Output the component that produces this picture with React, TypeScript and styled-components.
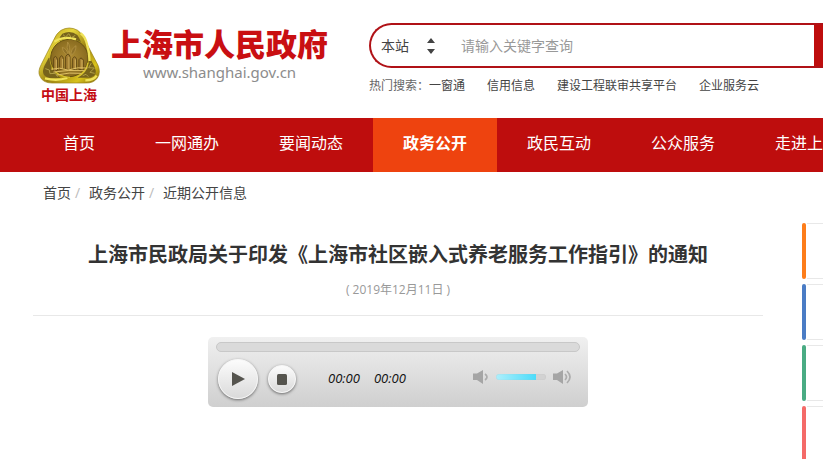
import React, { useState } from "react";
import styled, { createGlobalStyle, css } from "styled-components";

const cjk = `"Open Sans", "Noto Sans CJK SC", sans-serif`;

const GlobalStyle = createGlobalStyle`
  *, *::before, *::after { box-sizing: border-box; }
  body {
    margin: 0;
    background: #fff;
    color: #444;
    font-family: ${cjk};
    font-size: 14px;
    overflow-x: hidden;
  }
  button, input, select { font: inherit; color: inherit; }
  a { color: inherit; text-decoration: none; }
`;

const Header = styled.header`
  display: flex;
  align-items: flex-start;
  height: 118px;
  padding-left: 36px;
`;

const Brand = styled.a`
  display: flex;
  flex: 0 0 333px;
  gap: 9px;
  padding-top: 26px;
`;

const EmblemBlock = styled.span`
  display: flex;
  flex-direction: column;
  align-items: center;
  width: 66px;
`;

const EmblemCaption = styled.span`
  color: #c40d14;
  font-size: 14px;
  font-weight: 700;
  line-height: 18px;
`;

const BrandText = styled.span`
  display: flex;
  flex-direction: column;
  align-items: center;
`;

const BrandName = styled.strong`
  color: #c90f12;
  font-family: "Noto Sans CJK SC", sans-serif;
  font-size: 31px;
  font-weight: 900;
  line-height: 34px;
  white-space: nowrap;
`;

const BrandUrl = styled.span`
  color: #8c8c8c;
  font-family: "Noto Sans", sans-serif;
  font-size: 15px;
  line-height: 24px;
`;

const SearchArea = styled.div`
  flex: 1;
  min-width: 0;
  padding-top: 23px;
`;

const SearchForm = styled.form`
  display: flex;
  height: 45px;
  border: 2px solid #b01116;
  border-right: 0;
  border-radius: 23px 0 0 23px;
  overflow: hidden;
`;

const ScopeField = styled.label`
  display: flex;
  align-items: center;
  flex: 0 0 70px;
  padding-left: 10px;
`;

const ScopeSelect = styled.select`
  width: 45px;
  padding: 0;
  border: 0;
  background: transparent;
  appearance: none;
  outline: 0;
`;

const SearchInput = styled.input`
  flex: 1;
  min-width: 0;
  padding: 0 20px;
  border: 0;
  outline: 0;
  background: transparent;
  &::placeholder { color: #999; opacity: 1; }
`;

const SearchButton = styled.button`
  flex: 0 0 9px;
  padding: 0;
  border: 0;
  background: #be0d0d;
`;

const HotSearch = styled.div`
  display: flex;
  gap: 22px;
  padding-top: 8px;
  font-size: 12px;
  line-height: 20px;
  white-space: nowrap;
`;

const HotLabel = styled.span`
  margin-right: -22px;
  color: #666;
`;

const Nav = styled.nav`
  display: flex;
  height: 54px;
  padding-left: 33px;
  background: #be0d0d;
  overflow: hidden;
`;

const NavLink = styled.a<{ $active?: boolean }>`
  flex: none;
  padding: 0 30px;
  color: #fff;
  font-size: 16px;
  line-height: 50px;
  white-space: nowrap;
  ${(p) => p.$active && css`
    background: #ee430f;
    font-weight: 700;
  `}
`;

const Breadcrumb = styled.nav`
  display: flex;
  padding: 10px 0 0 43px;
  line-height: 22px;
`;

const Crumb = styled.a`
  &:not(:last-child)::after {
    content: "/";
    display: inline-block;
    width: 18px;
    padding-left: 4px;
    color: #bbb;
  }
`;

const Main = styled.main`
  display: flex;
  gap: 39px;
  padding: 19px 0 0 33px;
  overflow: hidden;
`;

const Article = styled.article`
  flex: 1;
  min-width: 0;
  text-align: center;
`;

const Heading = styled.header`
  padding: 17px 0 15px;
  border-bottom: 1px solid #e8e8e8;
`;

const Title = styled.h1`
  margin: 0;
  color: #333;
  font-size: 20px;
  font-weight: 700;
  line-height: 30px;
`;

const PublishDate = styled.time`
  display: block;
  padding-top: 10px;
  color: #999;
  font-size: 12px;
  line-height: 20px;
`;

const Player = styled.section`
  display: flex;
  flex-direction: column;
  width: 380px;
  height: 70px;
  margin: 21px auto 0;
  padding: 5px 8px 0;
  border-radius: 5px;
  background: linear-gradient(#f0f0f0, #cfcfcf);
`;

const Range = styled.input`
  display: block;
  margin: 0;
  appearance: none;
  outline: 0;
  &::-webkit-slider-thumb { appearance: none; width: 0; height: 0; }
`;

const SeekBar = styled(Range)`
  width: 100%;
  height: 10px;
  border: 1px solid #c8c8c8;
  border-radius: 5px;
  background: #dadada;
`;

const VolumeBar = styled(Range)`
  width: 50px;
  height: 6px;
  border-radius: 3px;
  background: linear-gradient(90deg, #aeeffc, #4bdcfa) 0 0 / 82% 100% no-repeat, #d2d2d2;
  box-shadow: inset 0 0 1px #b5b5b5;
`;

const Controls = styled.div`
  display: flex;
  align-items: center;
  padding: 7px 8px 0 2px;
`;

const RoundButton = styled.button<{ $size: number }>`
  display: flex;
  align-items: center;
  justify-content: center;
  width: ${(p) => p.$size}px;
  height: ${(p) => p.$size}px;
  margin-right: 10px;
  padding: 0;
  border: 1px solid #f7f7f7;
  border-radius: 50%;
  background: linear-gradient(#fcfcfc, #dadada);
  box-shadow: 0 1px 3px rgba(0, 0, 0, 0.5);
`;

const Times = styled.div`
  display: flex;
  gap: 14px;
  margin: 0 auto 0 22px;
  padding-bottom: 2px;
  color: #111;
  font-size: 13px;
  font-style: italic;
  line-height: 16px;
`;

const Volume = styled.div`
  display: flex;
  align-items: center;
  gap: 6px;
  padding-bottom: 4px;
`;

const IconButton = styled.button`
  display: flex;
  padding: 0;
  border: 0;
  background: transparent;
`;

const Sidebar = styled.aside`
  display: flex;
  flex: 0 0 21px;
  flex-direction: column;
  gap: 5px;
`;

const SideCard = styled.a<{ $color: string }>`
  display: flex;
  height: 56px;
  &::before {
    content: "";
    width: 4px;
    border-radius: 2px;
    background: ${(p) => p.$color};
  }
  &::after {
    content: "";
    flex: 1;
    margin-left: 1px;
    border: solid #e8e8e8;
    border-width: 1px 0;
  }
`;

const Emblem = () => (
  <svg width="64" height="60" viewBox="0 0 192 180" aria-hidden="true">
    <defs>
      <linearGradient id="gold" x1="0" y1="0" x2="1" y2="1">
        <stop offset="0" stopColor="#a78b12" />
        <stop offset=".3" stopColor="#e5d43b" />
        <stop offset=".55" stopColor="#9c8210" />
        <stop offset=".8" stopColor="#d8c21c" />
        <stop offset="1" stopColor="#7b6208" />
      </linearGradient>
      <radialGradient id="disc">
        <stop offset="0" stopColor="#b08d35" />
        <stop offset="1" stopColor="#896b1f" />
      </radialGradient>
    </defs>
    <path d="M72 13Q97-1 122 13Q136 22 145 45L183 118Q192 140 181 156Q170 172 145 171H45Q17 171 9 151Q1 137 13 115L50 42Q58 22 72 13Z" fill="url(#gold)" stroke="#967d12" strokeWidth="2" />
    <path d="M76 23Q101 12 121 27Q127 35 132 48Q100 30 66 45Q68 30 76 23ZM22 120L38 90Q35 131 72 156H39Q9 151 22 120ZM156 91L173 123Q184 148 160 155H119Q158 133 156 91Z" fill="#77631b" />
    <circle cx="97" cy="96" r="56" fill="url(#disc)" stroke="#665012" strokeWidth="3" />
    <path d="M131 22Q144 31 150 55Q157 77 158 105M52 47Q81 29 117 40M24 157Q59 166 91 156M145 163Q170 163 179 149" fill="none" stroke="#f0e35a" strokeWidth="7" />
    <path d="M36 96Q38 57 68 45M153 110Q149 140 119 155M44 125Q64 154 99 154" fill="none" stroke="#d7c22f" strokeWidth="4" />
    <path d="M92 48Q101 61 97 83Q86 64 92 48ZM76 64Q91 69 93 87Q77 81 76 64ZM117 59Q117 79 102 88Q101 69 117 59Z" fill="#8f7127" stroke="#ba9949" strokeWidth="2" />
    <path d="M50 137V97Q56 85 61 99V133ZM68 130V96Q75 82 79 97V128ZM86 130V92Q94 76 99 93V130ZM107 130V98Q113 87 118 98V130ZM126 131V101Q132 91 139 102V129Z" fill="#a68134" stroke="#624914" strokeWidth="3" />
    <path d="M58 101V132M77 99V128M96 92V130M115 100V130M135 102V130" stroke="#d2b05b" strokeWidth="3" />
    <path d="M43 130Q67 122 93 132Q123 122 151 126M49 138Q93 131 143 134M59 147Q97 138 134 142" fill="none" stroke="#dfc165" strokeWidth="3" />
    <path d="M78 26l8 7 9-10 8 12 12-7M25 128l12 4 2 11 16-1 7 10M163 111l-8 14 17 1-13 13 14 3M137 149l10-4 7 7" fill="none" stroke="#b1a045" strokeWidth="3" />
  </svg>
);

const Sorter = () => (
  <svg width="10" height="16" viewBox="0 0 10 16" aria-hidden="true">
    <path d="M1 5L5 0L9 5ZM1 11L5 16L9 11Z" fill="#444" />
  </svg>
);

const Speaker = ({ loud = false }: { loud?: boolean }) => (
  <svg width={loud ? 20 : 18} height="16" viewBox={`0 0 ${loud ? 20 : 18} 16`} aria-hidden="true">
    <path d="M1 4.5H5L11 1V15L5 11H1Z" fill="#a5a5a5" />
    <path
      d={loud ? "M13 5Q16 8 13 11M15 2Q21 8 15 14" : "M13 5Q17 8 13 11"}
      fill="none"
      stroke="#acacac"
      strokeWidth="1.7"
    />
  </svg>
);

const hotWords = ["一窗通", "信用信息", "建设工程联审共享平台", "企业服务云"];
const navItems = ["首页", "一网通办", "要闻动态", "政务公开", "政民互动", "公众服务", "走进上海"];
const crumbs = ["首页", "政务公开", "近期公开信息"];
const sideColors = ["#fd7d1a", "#4a7cc5", "#49ab83", "#f46a68"];

export default function App() {
  const [position, setPosition] = useState(0);
  const [volume, setVolume] = useState(80);

  return (
    <>
      <GlobalStyle />
      <Header>
        <Brand href="#">
          <EmblemBlock>
            <Emblem />
            <EmblemCaption>中国上海</EmblemCaption>
          </EmblemBlock>
          <BrandText>
            <BrandName>上海市人民政府</BrandName>
            <BrandUrl>www.shanghai.gov.cn</BrandUrl>
          </BrandText>
        </Brand>
        <SearchArea>
          <SearchForm onSubmit={(e) => e.preventDefault()}>
            <ScopeField>
              <ScopeSelect aria-label="搜索范围">
                <option>本站</option>
              </ScopeSelect>
              <Sorter />
            </ScopeField>
            <SearchInput aria-label="关键字" placeholder="请输入关键字查询" />
            <SearchButton aria-label="搜索" />
          </SearchForm>
          <HotSearch>
            <HotLabel>热门搜索：</HotLabel>
            {hotWords.map((word) => <a href="#" key={word}>{word}</a>)}
          </HotSearch>
        </SearchArea>
      </Header>
      <Nav>
        {navItems.map((item) => (
          <NavLink href="#" key={item} $active={item === "政务公开"}>{item}</NavLink>
        ))}
      </Nav>
      <Breadcrumb>
        {crumbs.map((crumb) => <Crumb href="#" key={crumb}>{crumb}</Crumb>)}
      </Breadcrumb>
      <Main>
        <Article>
          <Heading>
            <Title>上海市民政局关于印发《上海市社区嵌入式养老服务工作指引》的通知</Title>
            <PublishDate dateTime="2019-12-11">( 2019年12月11日 )</PublishDate>
          </Heading>
          <Player>
            <SeekBar type="range" aria-label="播放进度" value={position} onChange={(e) => setPosition(Number(e.target.value))} />
            <Controls>
              <RoundButton $size={40} aria-label="播放">
                <svg width="14" height="14" viewBox="0 0 14 14"><path d="M1 0L14 7L1 14Z" fill="#55544e" /></svg>
              </RoundButton>
              <RoundButton $size={28} aria-label="停止">
                <svg width="10" height="11" viewBox="0 0 10 11"><rect width="10" height="11" rx="1.5" fill="#55544e" /></svg>
              </RoundButton>
              <Times>
                <span>00:00</span>
                <span>00:00</span>
              </Times>
              <Volume>
                <IconButton aria-label="静音"><Speaker /></IconButton>
                <VolumeBar
                  type="range"
                  aria-label="音量"
                  value={volume}
                  style={{ backgroundSize: `${volume}% 100%, auto` }}
                  onChange={(e) => setVolume(Number(e.target.value))}
                />
                <IconButton aria-label="最大音量"><Speaker loud /></IconButton>
              </Volume>
            </Controls>
          </Player>
        </Article>
        <Sidebar>
          {sideColors.map((color) => <SideCard href="#" aria-label="相关栏目" key={color} $color={color} />)}
        </Sidebar>
      </Main>
    </>
  );
}
